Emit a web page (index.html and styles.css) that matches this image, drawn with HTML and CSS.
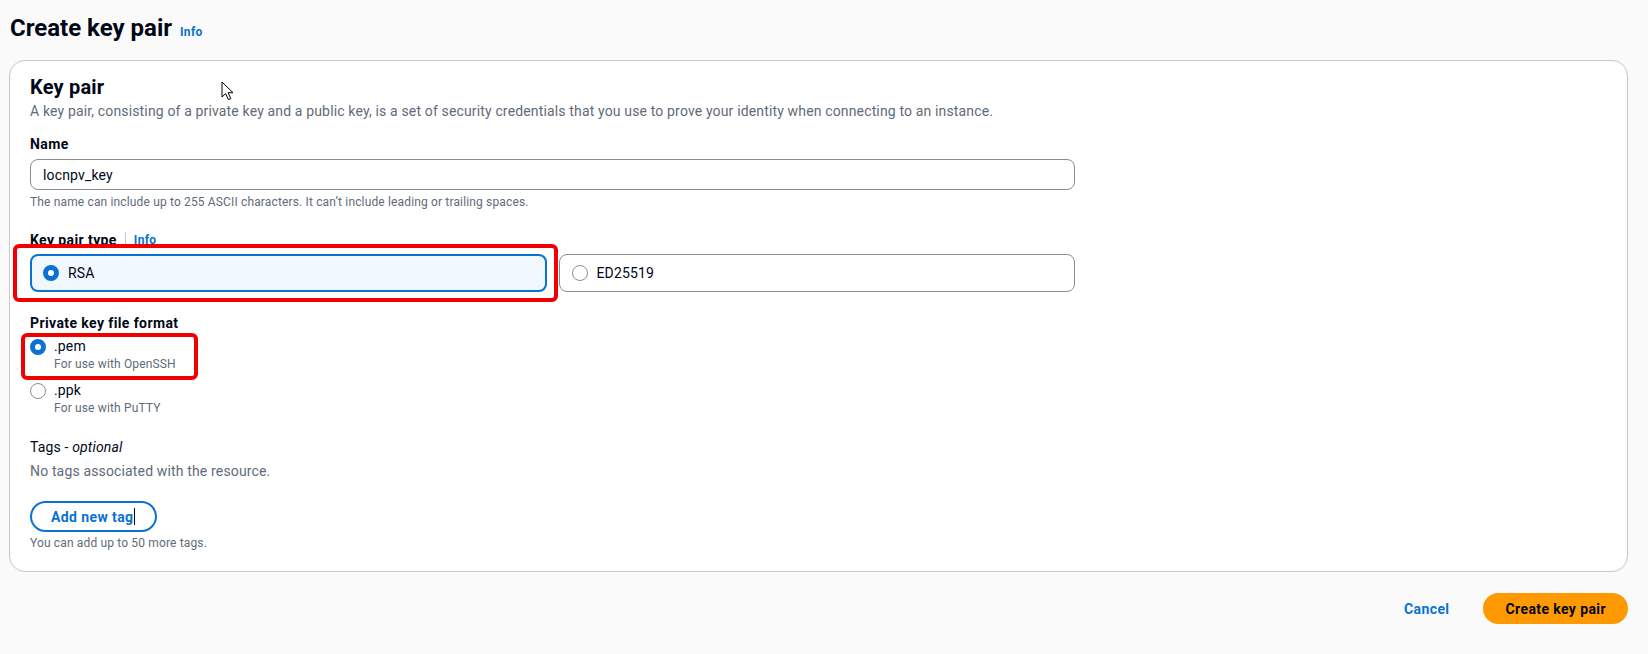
FILE: index.html
```html
<!DOCTYPE html>
<html lang="en">
<head>
<meta charset="utf-8">
<title>Create key pair</title>
<link rel="stylesheet" href="styles.css">
</head>
<body>
<div class="page">
  <header class="page-header">
    <h1 class="page-title">Create key pair</h1>
    <a class="info-link info-title">Info</a>
  </header>

  <section class="card">
    <h2 class="card-title">Key pair</h2>
    <p class="card-desc">A key pair, consisting of a private key and a public key, is a set of security credentials that you use to prove your identity when connecting to an instance.</p>

    <div class="field field-name">
      <div class="label">Name</div>
      <div class="input">locnpv_key</div>
      <p class="hint">The name can include up to 255 ASCII characters. It can’t include leading or trailing spaces.</p>
    </div>

    <div class="field field-type">
      <div class="label-row">
        <span class="label">Key pair type</span>
        <span class="label-sep"></span>
        <a class="info-link">Info</a>
      </div>
      <div class="tiles">
        <div class="tile tile-selected"><span class="radio radio-on"></span><span class="tile-text">RSA</span></div>
        <div class="tile"><span class="radio"></span><span class="tile-text">ED25519</span></div>
        <div class="highlight hl-rsa"></div>
      </div>
    </div>

    <div class="field field-format">
      <div class="label">Private key file format</div>
      <div class="options">
        <div class="option option-pem">
          <span class="radio radio-on"></span>
          <div class="option-body">
            <div class="option-label">.pem</div>
            <div class="option-desc">For use with OpenSSH</div>
          </div>
          <div class="highlight hl-pem"></div>
        </div>
        <div class="option option-ppk">
          <span class="radio"></span>
          <div class="option-body">
            <div class="option-label">.ppk</div>
            <div class="option-desc">For use with PuTTY</div>
          </div>
        </div>
      </div>
    </div>

    <div class="tags">
      <div class="tags-label">Tags - <i>optional</i></div>
      <p class="tags-empty">No tags associated with the resource.</p>
      <button class="btn-normal" type="button">Add new tag<span class="caret"></span></button>
      <p class="hint tags-hint">You can add up to 50 more tags.</p>
    </div>
  </section>

  <footer class="actions">
    <button class="btn-link" type="button">Cancel</button>
    <button class="btn-primary" type="button">Create key pair</button>
  </footer>

  <svg class="mouse-cursor" width="14" height="20" viewBox="0 0 14 20" aria-hidden="true">
    <path d="M1 1 L1 16 L4.6 12.6 L7.4 18.6 L9.8 17.6 L7.1 11.7 L12 11.7 Z" fill="#ffffff" stroke="#000000" stroke-width="1" stroke-linejoin="miter"/>
  </svg>
</div>
</body>
</html>
```

FILE: styles.css
```css
* {
  box-sizing: border-box;
}

html, body {
  margin: 0;
  padding: 0;
}

body {
  background: #fafafa;
  color: #000716;
  font-family: Roboto, "Open Sans", "Liberation Sans", sans-serif;
  font-size: 14px;
  line-height: 20px;
  letter-spacing: 0.15px;
}

.page {
  position: relative;
  padding: 13px 20px 0 9px;
  width: 1648px;
  height: 654px;
  overflow: hidden;
}

.page-header {
  display: flex;
  align-items: baseline;
  gap: 8px;
  padding-left: 1px;
  height: 30px;
}

.page-title {
  margin: 0;
  font-size: 24px;
  line-height: 30px;
  font-weight: 700;
  letter-spacing: 0;
}

.info-link {
  color: #0972d3;
  font-size: 12px;
  font-weight: 700;
  line-height: 16px;
  letter-spacing: 0.3px;
  text-decoration: none;
}

.card {
  margin-top: 17px;
  background: #ffffff;
  border: 1px solid #c6c6cd;
  border-radius: 16px;
  padding: 14px 20px 20px 20px;
}

.card-title {
  margin: 0;
  font-size: 20px;
  line-height: 24px;
  font-weight: 700;
  letter-spacing: 0.2px;
}

.card-desc {
  margin: 2px 0 0 0;
  color: #5f6b7a;
}

.field {
  width: 1045px;
}

.field-name {
  margin-top: 13px;
}

.label {
  font-weight: 700;
  line-height: 20px;
  letter-spacing: 0.4px;
}

.input {
  margin-top: 5px;
  height: 31px;
  border: 1px solid #8c8c94;
  border-radius: 8px;
  padding: 0 12px;
  display: flex;
  align-items: center;
  color: #000716;
}

.hint {
  margin: 4px 0 0 0;
  font-size: 12px;
  line-height: 16px;
  color: #5f6b7a;
}

.field-type {
  margin-top: 20px;
}

.label-row {
  display: flex;
  align-items: center;
  height: 20px;
}

.label-sep {
  width: 1px;
  height: 16px;
  background: #c6c6cd;
  margin: 0 8px 0 8px;
}

.tiles {
  position: relative;
  margin-top: 4px;
  display: grid;
  grid-template-columns: 1fr 1fr;
  gap: 12px;
}

.tile {
  height: 38px;
  border: 1px solid #8c8c94;
  border-radius: 8px;
  display: flex;
  align-items: center;
  padding-left: 12px;
  gap: 9px;
}

.tile-selected {
  border: 2px solid #0972d3;
  background: #f0f8fe;
  padding-left: 11px;
}

.radio {
  flex: none;
  width: 16px;
  height: 16px;
  border-radius: 50%;
  border: 1.5px solid #8c8c94;
  background: #ffffff;
}

.radio-on {
  border: 5px solid #0972d3;
  background: #ffffff;
}

.highlight {
  position: absolute;
  border: 4px solid #f00000;
  border-radius: 6px;
  pointer-events: none;
}

.hl-rsa {
  left: -17px;
  top: -10px;
  width: 545px;
  height: 58px;
}

.field-format {
  margin-top: 21px;
}

.options {
  margin-top: 3px;
  display: flex;
  flex-direction: column;
  gap: 8px;
}

.option {
  position: relative;
  display: flex;
  align-items: flex-start;
  gap: 8px;
}

.option .radio {
  margin-top: 3px;
}

.option-label {
  line-height: 20px;
}

.option-desc {
  font-size: 12px;
  line-height: 16px;
  color: #5f6b7a;
}

.hl-pem {
  left: -9px;
  top: -3px;
  width: 177px;
  height: 47px;
}

.tags {
  margin-top: 21px;
}

.tags-label {
  line-height: 20px;
}

.tags-label i {
  font-style: italic;
}

.tags-empty {
  margin: 4px 0 0 0;
  color: #5f6b7a;
}

.btn-normal {
  margin-top: 20px;
  height: 31px;
  padding: 0 20px 0 19px;
  border: 2px solid #0972d3;
  border-radius: 20px;
  background: #ffffff;
  color: #0972d3;
  font-family: inherit;
  font-size: 14px;
  font-weight: 700;
  line-height: 20px;
  letter-spacing: 0.4px;
  display: inline-flex;
  align-items: center;
}

.caret {
  display: inline-block;
  width: 1px;
  height: 17px;
  margin-left: 1px;
  background: #000716;
}

.tags-hint {
  margin-top: 3px;
}

.actions {
  margin-top: 21px;
  display: flex;
  justify-content: flex-end;
  align-items: center;
  gap: 14px;
}

.btn-link {
  border: none;
  background: transparent;
  color: #0972d3;
  font-family: inherit;
  font-size: 14px;
  font-weight: 700;
  letter-spacing: 0.4px;
  padding: 0 20px;
  height: 31px;
}

.btn-primary {
  height: 31px;
  padding: 0 22px;
  border: none;
  border-radius: 20px;
  background: #ff9900;
  color: #000716;
  font-family: inherit;
  font-size: 14px;
  font-weight: 700;
  letter-spacing: 0.4px;
}

.mouse-cursor {
  position: absolute;
  left: 221px;
  top: 81px;
}
```
